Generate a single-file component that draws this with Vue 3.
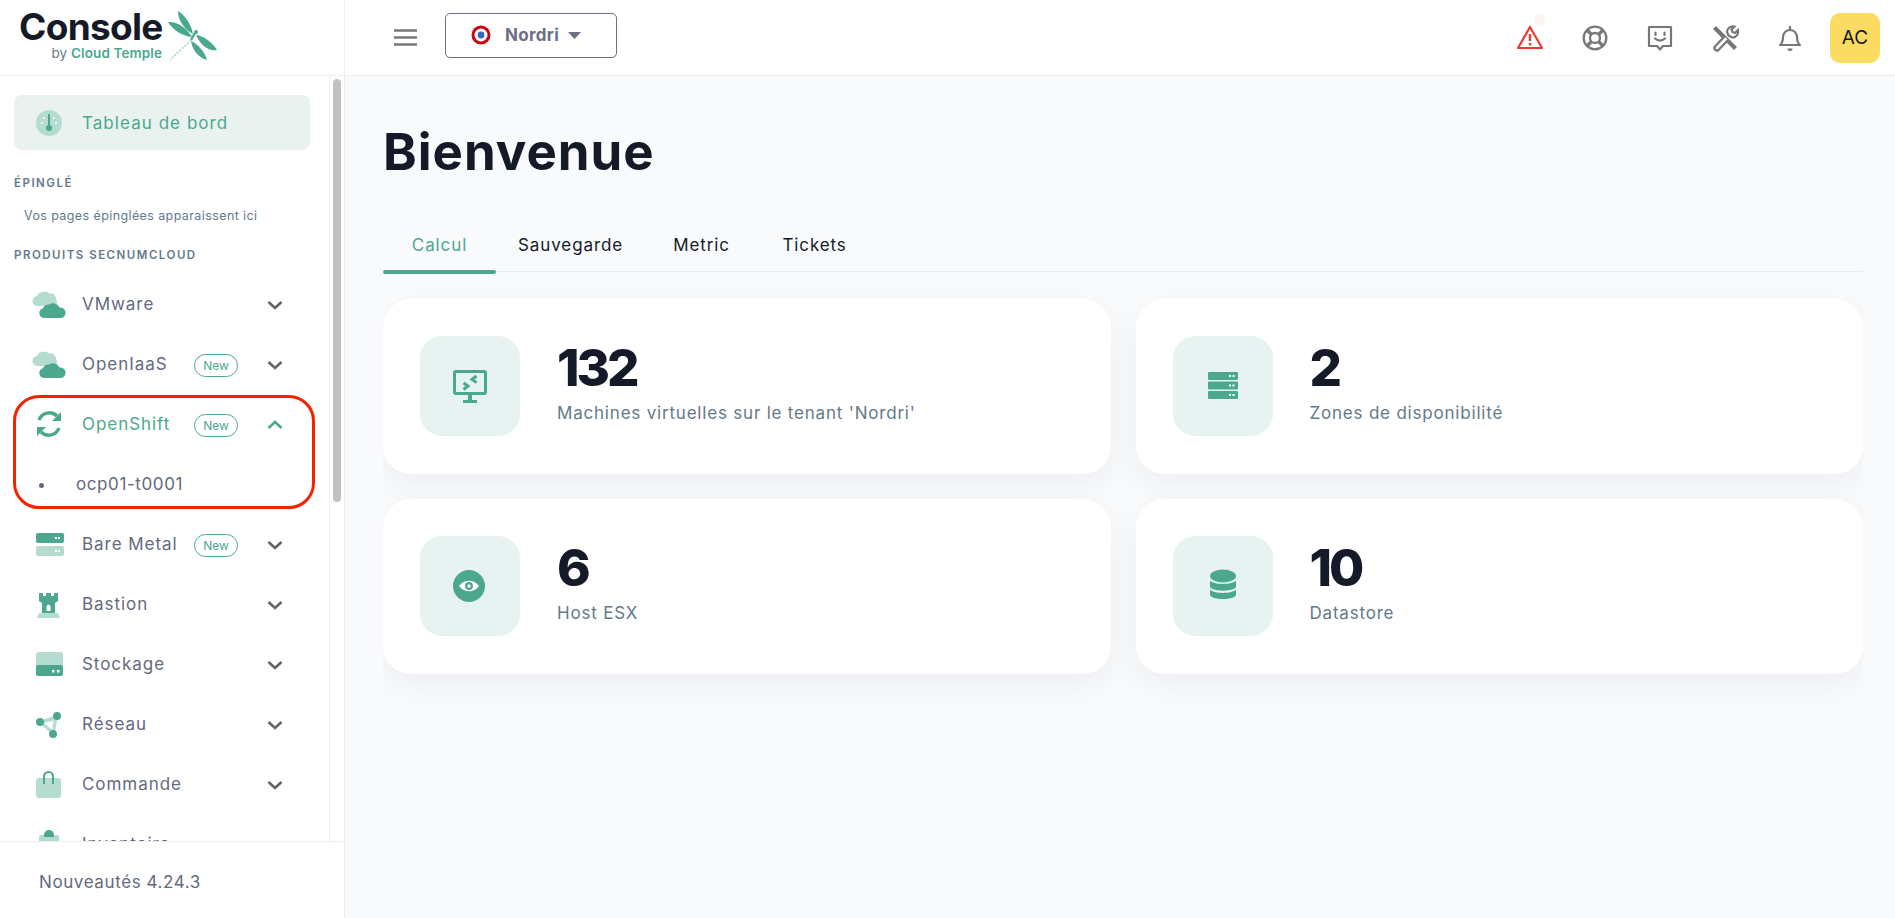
<script setup>
const G = '#4ba88f'
const L = '#b5dcd1'
const cloud = [
  { d: 'M6 19a5 5 0 0 1-1-10 6 6 0 0 1 6-4 5 5 0 0 1 6 1.500 5.500 5.500 0 0 1 7 5.500 5 5 0 0 1-1 7z', f: L },
  { d: 'M12 31a5 5 0 0 1-1-9.800 6 6 0 0 1 6-3.700 7 7 0 0 1 10.500 3 5.300 5.300 0 0 1 1.500 10.500z', f: G }
]
const icons = {
  cloud,
  bare: [
    { d: 'M6 6h24a2 2 0 0 1 2 2v6a2 2 0 0 1-2 2H6a2 2 0 0 1-2-2V8a2 2 0 0 1 2-2z', f: G },
    { d: 'M6 19h24a2 2 0 0 1 2 2v6a2 2 0 0 1-2 2H6a2 2 0 0 1-2-2v-6a2 2 0 0 1 2-2z', f: L },
    { d: 'M23 10h2v2h-2zM26 10h2v2h-2zM23 23h2v2h-2zM26 23h2v2h-2z', f: '#fff' }
  ],
  bastion: [
    { d: 'M7 26h19l2 5H5z', f: L },
    { d: 'M7 6h4v3h3V6h5v3h3V6h4v8l-3 2v10H10V16l-3-2z', f: G },
    { d: 'M14.500 24v-4a2 2.500 0 0 1 4 0v4z', f: '#fff' }
  ],
  storage: [
    { d: 'M7 5h21a3 3 0 0 1 3 3v11H4V8a3 3 0 0 1 3-3z', f: L },
    { d: 'M4 20a2 2 0 0 1 2-2h23a2 2 0 0 1 2 2v7a2 2 0 0 1-2 2H6a2 2 0 0 1-2-2z', f: G },
    { d: 'M20 23h2.500v2.500H20zM25 23h2.500v2.500H25z', f: '#fff' }
  ],
  network: [
    { d: 'M8 14l16-6 1.500 2.500-3 17-3-.500 2-13.500L9 17zM8 17l11 9 2-2.500-11-9z', f: L },
    { d: 'M8 11a4 4 0 1 1 0 8 4 4 0 0 1 0-8zM25 5a4 4 0 1 1 0 8 4 4 0 0 1 0-8zM21 23a4 4 0 1 1 0 8 4 4 0 0 1 0-8z', f: G }
  ],
  bag: [
    { d: 'M7 11h19a3 3 0 0 1 3 3v14a3 3 0 0 1-3 3H7a3 3 0 0 1-3-3V14a3 3 0 0 1 3-3z', f: L },
    { d: 'M11 17V9.500a5.500 5.500 0 0 1 11 0V17h-2V9.500a3.500 3.500 0 0 0-7 0V17z', f: G }
  ],
  clip: [
    { d: 'M9 8h16a2 2 0 0 1 2 2v21H7V10a2 2 0 0 1 2-2z', f: L },
    { d: 'M17 3a5 5 0 0 1 5 5v2H12V8a5 5 0 0 1 5-5z', f: G }
  ]
}
const before = [
  { name: 'VMware', icon: 'cloud' },
  { name: 'OpenIaaS', icon: 'cloud', badge: true }
]
const after = [
  { name: 'Bare Metal', icon: 'bare', badge: true },
  { name: 'Bastion', icon: 'bastion' },
  { name: 'Stockage', icon: 'storage' },
  { name: 'Réseau', icon: 'network' },
  { name: 'Commande', icon: 'bag' },
  { name: 'Inventaire', icon: 'clip' }
]
const tabs = ['Calcul', 'Sauvegarde', 'Metric', 'Tickets']
const cards = [
  { value: '132', label: "Machines virtuelles sur le tenant 'Nordri'", icon: 'monitor' },
  { value: '2', label: 'Zones de disponibilité', icon: 'servers' },
  { value: '6', label: 'Host ESX', icon: 'eye' },
  { value: '10', label: 'Datastore', icon: 'db' }
]
</script>

<template>
  <div class="app">
    <aside class="sidebar">
      <div class="logo">
        <div class="logo-text">
          <div class="logo-main">Console</div>
          <div class="logo-sub">by <b>Cloud Temple</b></div>
        </div>
        <svg class="fly" width="52" height="52" viewBox="0 0 52 52" fill="#4ba88f">
          <path d="M11 1C18 5 24 14 26 24 18 20 11 11 11 1z" />
          <path d="M1 12C10 11 20 18 25 27 15 26 6 20 1 12z" />
          <path d="M29 25C37 26 45 32 50 40 41 42 33 34 29 25z" />
          <path d="M24 31C31 34 38 42 40 50 32 48 25 40 24 31z" />
          <circle cx="29" cy="22" r="2" />
          <path d="M28 23L24 30" stroke="#4ba88f" stroke-width="2.500" />
          <path d="M24 30L3 50" stroke="#b5dcd1" stroke-width="2" stroke-dasharray="2 1.500" />
        </svg>
      </div>
      <div class="side-body">
        <nav class="nav">
          <a class="dash">
            <svg width="26" height="26" viewBox="0 0 26 26">
              <circle cx="13" cy="13" r="13" fill="#b5dcd1" />
              <path d="M12 4h2v12h-2z" fill="#4ba88f" />
              <circle cx="13" cy="18" r="3" fill="#4ba88f" />
              <path d="M5 12h2v2H5zM19 12h2v2h-2zM7 7h2v2H7zM17 7h2v2h-2z" fill="#e9f2ef" />
            </svg>
            <span>Tableau de bord</span>
          </a>
          <div class="sec sec-pin">ÉPINGLÉ</div>
          <div class="hint">Vos pages épinglées apparaissent ici</div>
          <div class="sec sec-prod">PRODUITS SECNUMCLOUD</div>

          <a v-for="m in before" :key="m.name" class="item">
            <svg class="ico" width="34" height="34" viewBox="0 0 34 34">
              <path v-for="(p, i) in icons[m.icon]" :key="i" :d="p.d" :fill="p.f" />
            </svg>
            <span class="label">{{ m.name }}</span>
            <span v-if="m.badge" class="badge">New</span>
            <svg class="chev" width="16" height="10" viewBox="0 0 16 10"><path d="M1.500 2l6.500 6 6.500-6" fill="none" stroke="#666" stroke-width="2.700" /></svg>
          </a>

          <div class="group">
            <a class="item active">
              <svg class="ico" width="34" height="34" viewBox="0 0 34 34">
                <path d="M7 13a11 11 0 0 1 18-4" fill="none" stroke="#4ba88f" stroke-width="3.400" />
                <path d="M29 5v9h-9z" fill="#4ba88f" />
                <path d="M27 21a11 11 0 0 1-18 4" fill="none" stroke="#4ba88f" stroke-width="3.400" />
                <path d="M5 29v-9h9z" fill="#4ba88f" />
              </svg>
              <span class="label">OpenShift</span>
              <span class="badge">New</span>
              <svg class="chev" width="16" height="10" viewBox="0 0 16 10"><path d="M1.500 8l6.500-6 6.500 6" fill="none" stroke="#4ba88f" stroke-width="2.700" /></svg>
            </a>
            <a class="sub"><i class="dot"></i>ocp01-t0001</a>
            <div class="annot"></div>
          </div>

          <a v-for="m in after" :key="m.name" class="item">
            <svg class="ico" width="34" height="34" viewBox="0 0 34 34">
              <path v-for="(p, i) in icons[m.icon]" :key="i" :d="p.d" :fill="p.f" />
            </svg>
            <span class="label">{{ m.name }}</span>
            <span v-if="m.badge" class="badge">New</span>
            <svg class="chev" width="16" height="10" viewBox="0 0 16 10"><path d="M1.500 2l6.500 6 6.500-6" fill="none" stroke="#666" stroke-width="2.700" /></svg>
          </a>
        </nav>
        <div class="track"><div class="thumb"></div></div>
      </div>
      <div class="foot">Nouveautés 4.24.3</div>
    </aside>

    <div class="content">
      <header class="topbar">
        <svg class="burger" width="24" height="17" viewBox="0 0 24 17"><path d="M1 1.500h23M1 8.500h23M1 15.500h23" stroke="#777" stroke-width="2.400" /></svg>
        <button class="tenant">
          <svg width="20" height="20" viewBox="0 0 20 20">
            <circle cx="10" cy="10" r="9.500" fill="#c8060d" />
            <circle cx="10" cy="10" r="6.500" fill="#fff" />
            <circle cx="10" cy="10" r="3.400" fill="#3667bd" />
          </svg>
          <span>Nordri</span>
          <svg width="13" height="7" viewBox="0 0 13 7"><path d="M0 0h13L6.500 7z" fill="#6b7085" /></svg>
        </button>
        <div class="actions">
          <span class="act">
            <i class="ping"></i>
            <svg width="30" height="30" viewBox="0 0 30 30" fill="none" stroke="#ee3a32" stroke-width="2.200" stroke-linejoin="round">
              <path d="M15 4L27 25H3z" />
              <path d="M15 11v7M15 20v2.400" stroke-width="2.400" />
            </svg>
          </span>
          <span class="act">
            <svg width="30" height="30" viewBox="0 0 30 30" fill="none" stroke="#777" stroke-width="2.300">
              <circle cx="15" cy="15" r="11.300" />
              <circle cx="15" cy="15" r="5" />
              <path d="M7 7l4.500 4.500M23 7l-4.500 4.500M7 23l4.500-4.500M23 23l-4.500-4.500" stroke-width="3.200" />
            </svg>
          </span>
          <span class="act">
            <svg width="30" height="30" viewBox="0 0 30 30" fill="none" stroke="#777" stroke-width="2.200" stroke-linejoin="round">
              <path d="M4 4h22v19h-8l-3 3.500L12 23H4z" />
              <path d="M10.500 9.500v2.500M19.500 9.500v2.500M10 15.500c3 2.500 7 2.500 10 0" stroke-linecap="round" />
            </svg>
          </span>
          <span class="act">
            <svg width="30" height="30" viewBox="0 0 30 30" fill="none">
              <path d="M6 3l21 21-3 3L3 6z" fill="#777" />
              <path d="M14.500 13.500L5 23.500a2.500 2.500 0 0 0 3.500 3.500l9.500-10" stroke="#777" stroke-width="2.300" fill="#fff" />
              <path d="M18.500 12.500L17 9c0-3.500 3.500-6.500 7.500-5.500l-3 3 1 2.500 2.500 1 3-3c1 4-2 8-6 7.500z" stroke="#777" stroke-width="2.200" fill="#fff" />
            </svg>
          </span>
          <span class="act">
            <svg width="30" height="30" viewBox="0 0 30 30" fill="none" stroke="#777" stroke-width="2.200" stroke-linejoin="round">
              <path d="M5 22c2.500-2 3-4 3-8a7 7 0 0 1 14 0c0 4 .500 6 3 8z" />
              <path d="M15 3v4" />
              <path d="M12.500 25.500a2.500 2.500 0 0 0 5 0z" fill="#777" stroke="none" />
            </svg>
          </span>
          <div class="avatar">AC</div>
        </div>
      </header>

      <main class="main">
        <h1>Bienvenue</h1>
        <div class="tabs">
          <a v-for="(t, i) in tabs" :key="t" class="tab" :class="{ on: i === 0 }">{{ t }}</a>
        </div>
        <div class="clip">
          <div class="grid">
            <section v-for="c in cards" :key="c.value" class="card">
              <div class="box">
                <svg width="40" height="40" viewBox="0 0 40 40">
                  <g v-if="c.icon === 'monitor'" fill="none" stroke="#4ba88f" stroke-width="3">
                    <rect x="4.500" y="5.500" width="31" height="22" rx="1.500" />
                    <path d="M20 28v6" stroke-width="4" />
                    <path d="M13 35.500h14" stroke-width="3" />
                    <path d="M13.500 17l4.500 3-4.500 3.500M26.500 10l-4.500 3.500 4.500 3" />
                  </g>
                  <g v-else-if="c.icon === 'servers'">
                    <rect x="5" y="6" width="30" height="8" rx="1.200" fill="#4ba88f" />
                    <rect x="5" y="15.500" width="30" height="8" rx="1.200" fill="#4ba88f" />
                    <rect x="5" y="25" width="30" height="8" rx="1.200" fill="#4ba88f" />
                    <path d="M26 9h2v2h-2zM29.500 9h2v2h-2zM26 18.500h2v2h-2zM29.500 18.500h2v2h-2zM26 28h2v2h-2zM29.500 28h2v2h-2z" fill="#fff" />
                  </g>
                  <g v-else-if="c.icon === 'eye'">
                    <circle cx="19" cy="20" r="16" fill="#4ba88f" />
                    <path d="M9 20c5-7 15-7 20 0-5 7-15 7-20 0z" fill="#fff" />
                    <circle cx="19" cy="20" r="4" fill="#4ba88f" />
                    <circle cx="19" cy="20" r="1.700" fill="#fff" />
                  </g>
                  <g v-else fill="#4ba88f">
                    <ellipse cx="20" cy="10" rx="13" ry="6.500" />
                    <path d="M7 14.500c3 4.500 23 4.500 26 0v6c0 5.500-26 5.500-26 0z" />
                    <path d="M7 23.500c3 4.500 23 4.500 26 0v5c0 6-26 6-26 0z" />
                  </g>
                </svg>
              </div>
              <div class="txt">
                <div class="num">{{ c.value }}</div>
                <div class="lab">{{ c.label }}</div>
              </div>
            </section>
          </div>
        </div>
      </main>
    </div>
  </div>
</template>

<style>
html, body { margin: 0; background: #fff; }
</style>

<style scoped>
* { box-sizing: border-box; }
.app {
  display: flex;
  height: 918px;
  overflow: hidden;
  font-family: Inter, "Open Sans", sans-serif;
  color: #636a80;
}
.sidebar {
  width: 345px;
  flex: none;
  display: flex;
  flex-direction: column;
  background: #fff;
  border-right: 1px solid #eceef1;
}
.logo {
  height: 76px;
  flex: none;
  border-bottom: 1px solid #eceef1;
  display: flex;
  padding: 9px 0 0 19px;
}
.logo-text { width: 147px; }
.logo-main {
  font-size: 37px;
  line-height: 36px;
  font-weight: 700;
  color: #141a28;
  letter-spacing: -0.7px;
}
.logo-sub {
  font-size: 13.5px;
  line-height: 16px;
  text-align: right;
  padding-right: 4px;
  letter-spacing: 0.1px;
  color: #64798a;
}
.logo-sub b { color: #4ba88f; font-weight: 600; }
.fly { flex: none; margin: 1px 0 0 1px; }
.side-body {
  flex: 1;
  min-height: 0;
  display: flex;
}
.nav {
  flex: 1;
  min-width: 0;
  overflow: hidden;
  padding-top: 19px;
}
.track {
  width: 15px;
  flex: none;
  background: #fff;
  border-left: 1px solid #eceef1;
  padding: 3px 3px 0 3px;
}
.thumb {
  height: 423px;
  border-radius: 4px;
  background: #c1c1c1;
}
.dash {
  display: flex;
  align-items: center;
  gap: 20px;
  height: 55px;
  margin: 0 19px 0 14px;
  padding-left: 22px;
  background: #e9f2ef;
  border-radius: 8px;
  color: #4ba88f;
  font-size: 17px;
  letter-spacing: 1.05px;
}
.sec {
  margin-left: 14px;
  font-size: 11.5px;
  line-height: 16px;
  font-weight: 600;
  letter-spacing: 1.5px;
  color: #64798a;
}
.sec-pin { margin-top: 25px; }
.hint {
  margin: 17px 0 0 24px;
  font-size: 12.5px;
  line-height: 16px;
  letter-spacing: 0.4px;
  color: #64798a;
}
.sec-prod { margin-top: 23px; margin-bottom: 11px; }
.item {
  display: flex;
  align-items: center;
  height: 60px;
  padding: 0 46px 0 32px;
  font-size: 17px;
  letter-spacing: 0.95px;
}
.ico { flex: none; margin-right: 16px; }
.label { flex: 0 0 112px; white-space: nowrap; }
.badge {
  width: 44px;
  height: 23px;
  border: 1px solid #4ba88f;
  border-radius: 12px;
  color: #4ba88f;
  font-size: 12px;
  letter-spacing: 0;
  display: flex;
  align-items: center;
  justify-content: center;
  margin-top: 2px;
}
.chev { margin-left: auto; margin-top: 2px; flex: none; }
.item.active { color: #4ba88f; }
.group { position: relative; }
.sub {
  display: flex;
  align-items: center;
  height: 60px;
  padding-left: 39px;
  font-size: 17px;
  letter-spacing: 0.6px;
}
.dot {
  width: 5px;
  height: 5px;
  border-radius: 50%;
  background: #636a80;
  margin-right: 32px;
  margin-top: 2px;
}
.annot {
  position: absolute;
  left: 13px;
  top: 1px;
  width: 302px;
  height: 114px;
  border: 3px solid #f52200;
  border-radius: 26px;
  pointer-events: none;
}
.foot {
  height: 77px;
  flex: none;
  border-top: 1px solid #eceef1;
  display: flex;
  align-items: center;
  padding: 4px 0 0 39px;
  font-size: 17px;
  letter-spacing: 0.6px;
}
.content {
  flex: 1;
  min-width: 0;
  display: flex;
  flex-direction: column;
  background: #f9fafc;
}
.topbar {
  height: 76px;
  flex: none;
  background: #fff;
  border-bottom: 1px solid #eceef1;
  display: flex;
  align-items: center;
  padding: 0 15px 0 48px;
}
.burger { flex: none; margin-right: 28px; }
.tenant {
  width: 172px;
  height: 45px;
  margin-top: -5px;
  background: #fff;
  border: 1.5px solid #6b7085;
  border-radius: 5px;
  display: flex;
  align-items: center;
  padding: 0 0 0 25px;
  font: 700 17px Inter, sans-serif;
  letter-spacing: 0.3px;
  color: #6b7085;
}
.tenant span { margin: 0 9px 0 14px; }
.actions {
  margin-left: auto;
  display: flex;
  align-items: center;
}
.act {
  position: relative;
  width: 65px;
  display: flex;
  justify-content: center;
}
.ping {
  position: absolute;
  left: 37px;
  top: -9px;
  width: 11px;
  height: 11px;
  border-radius: 50%;
  background: #fdf3f2;
}
.avatar {
  width: 50px;
  height: 50px;
  margin-left: 8px;
  border-radius: 10px;
  background: #fbdb61;
  color: #141a28;
  font-size: 19px;
  display: flex;
  align-items: center;
  justify-content: center;
}
.main {
  flex: 1;
  padding: 46px 32px 0 38px;
}
h1 {
  margin: 0;
  font-size: 51px;
  line-height: 60px;
  font-weight: 700;
  letter-spacing: 1px;
  color: #141a28;
}
.tabs {
  display: flex;
  height: 54px;
  margin-top: 36px;
  border-bottom: 1px solid #e8eaee;
}
.tab {
  position: relative;
  min-width: 113px;
  padding: 0 22px;
  display: flex;
  align-items: center;
  justify-content: center;
  font-size: 17px;
  letter-spacing: 0.9px;
  color: #141a28;
}
.tab.on { color: #4ba88f; }
.tab.on::after {
  content: "";
  position: absolute;
  left: 0;
  right: 0;
  bottom: -3px;
  height: 4px;
  border-radius: 2px;
  background: #4ba88f;
}
.clip {
  margin-top: 4px;
  padding: 23px 0 40px;
  overflow: hidden;
}
.grid {
  display: grid;
  grid-template-columns: 1fr 1fr;
  gap: 25px;
}
.card {
  height: 175px;
  padding: 37px;
  display: flex;
  gap: 37px;
  background: #fff;
  border-radius: 28px;
  box-shadow: 0 10px 30px rgba(20, 26, 40, 0.05);
}
.box {
  width: 100px;
  height: 100px;
  flex: none;
  border-radius: 22px;
  background: #e6f3f0;
  display: flex;
  align-items: center;
  justify-content: center;
}
.txt { padding-top: 2px; }
.num {
  font-size: 51px;
  line-height: 60px;
  font-weight: 800;
  letter-spacing: -3px;
  color: #141a28;
}
.lab {
  font-size: 17px;
  line-height: 31px;
  letter-spacing: 0.8px;
  color: #64798a;
}
</style>
